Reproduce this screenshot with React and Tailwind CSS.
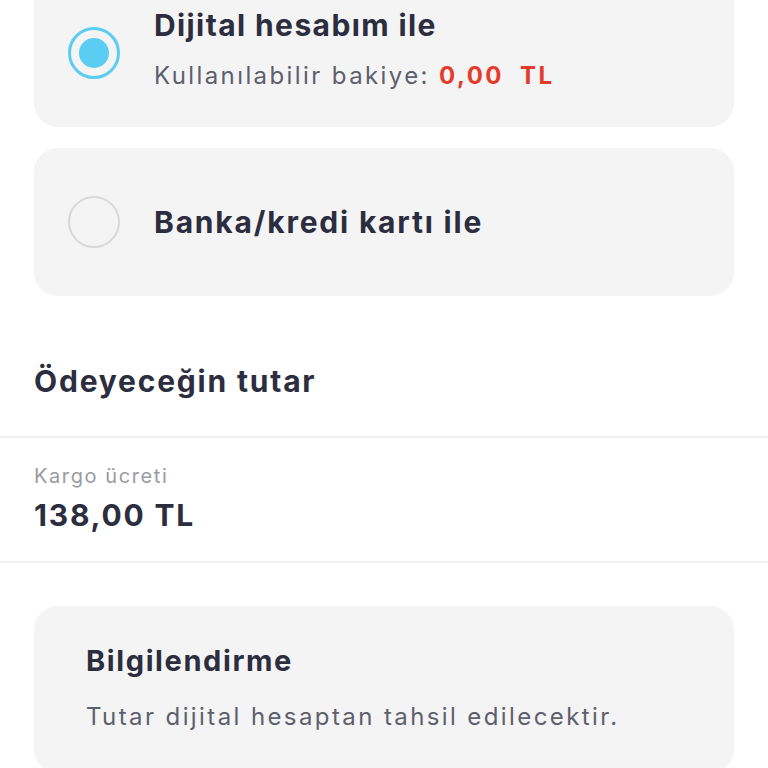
const font = { fontFamily: "Inter, 'Noto Sans', sans-serif" };

const Radio = ({ checked }) =>
  checked ? (
    <div className="w-[52px] h-[52px] rounded-full border-[3px] border-[#5ccdf2] flex items-center justify-center shrink-0">
      <div className="w-[30px] h-[30px] rounded-full bg-[#5ccdf2]" />
    </div>
  ) : (
    <div className="w-[52px] h-[52px] rounded-full border-[2.5px] border-[#d9d9dc] shrink-0" />
  );

export default function App() {
  return (
    <div className="w-[768px] h-[768px] overflow-hidden bg-white text-[#2c2e3f]" style={font}>
      <div className="px-[34px]">
        <div className="-mt-[22px] h-[149px] rounded-[24px] bg-[#f4f4f5] flex items-center pl-[34px] gap-[34px]">
          <Radio checked />
          <div className="flex flex-col mb-[6px]">
            <span className="text-[30px] font-bold leading-[36px] tracking-[1.4px]">Dijital hesabım ile</span>
            <span className="text-[24px] leading-[32px] mt-[17px] text-[#5d606c] tracking-[2.4px]">
              Kullanılabilir bakiye: <span className="font-bold text-[#e53b2c]">0,00&nbsp; TL</span>
            </span>
          </div>
        </div>
        <div className="mt-[21px] h-[148px] rounded-[24px] bg-[#f4f4f5] flex items-center pl-[34px] gap-[34px]">
          <Radio />
          <span className="text-[30px] font-bold leading-[36px] tracking-[1.8px]">Banka/kredi kartı ile</span>
        </div>
      </div>

      <div className="px-[34px] pt-[67px] pb-[37px]">
        <h2 className="text-[30px] font-bold leading-[36px] tracking-[1.8px]">Ödeyeceğin tutar</h2>
      </div>
      <div className="h-[2px] bg-[#f0f0f1]" />
      <div className="px-[34px] pt-[25px] pb-[28px] flex flex-col">
        <span className="text-[20px] leading-[26px] text-[#9a9ba1] tracking-[1.6px]">Kargo ücreti</span>
        <span className="text-[30px] font-bold leading-[36px] mt-[8px] tracking-[1.8px]">138,00 TL</span>
      </div>
      <div className="h-[2px] bg-[#f0f0f1]" />

      <div className="px-[34px] mt-[43px]">
        <div className="rounded-[24px] bg-[#f4f4f5] px-[52px] pt-[37px] pb-[40px]">
          <h3 className="text-[29px] font-bold leading-[36px] tracking-[1.6px]">Bilgilendirme</h3>
          <p className="text-[24px] leading-[32px] text-[#5d606c] mt-[22px] tracking-[2.4px]">Tutar dijital hesaptan tahsil edilecektir.</p>
        </div>
      </div>
    </div>
  );
}
